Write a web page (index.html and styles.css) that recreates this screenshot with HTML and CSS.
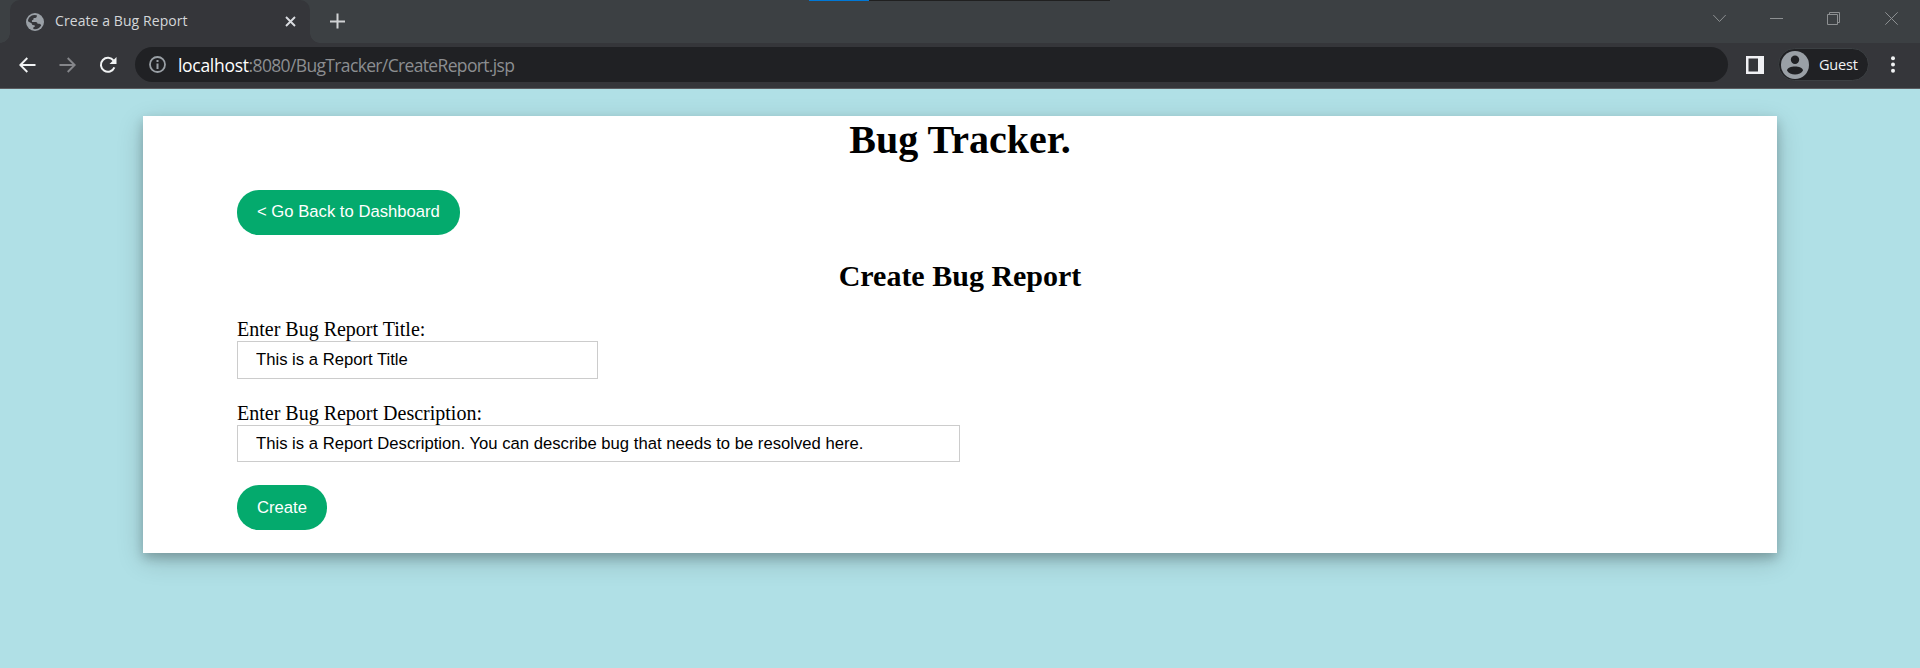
FILE: index.html
```html
<!DOCTYPE html>
<html lang="en">
<head>
<meta charset="utf-8">
<title>Create a Bug Report</title>
<link rel="stylesheet" href="styles.css">
</head>
<body>
<header class="browser">
  <div class="tabstrip">
    <div class="capture-bar"></div>
    <div class="tab">
      <svg class="favicon" width="18" height="18" viewBox="0 0 18 18"><circle cx="9" cy="9" r="9" fill="#9aa0a6"/><path d="M2 8.200C2 4.800 4.800 2 8.200 1.900L10.800 2.200L10.800 3.400Q10.600 4.800 9.200 4.900L7.600 5L7.500 6.600L5.900 7.400L6 8.900L9.800 8.900Q11.500 9.100 11.600 10.700L13.400 10.800Q14.600 11 15.200 12.300C13.800 14.800 11.700 16.200 9 16.200L7.300 15.900L7.400 14.300L8.800 13.700L8.600 12.300L6.400 11.900L5.500 10.200L3.600 9.200Z" fill="#35363a"/></svg>
      <span class="tab-title">Create a Bug Report</span>
      <svg class="tab-close" width="11" height="11" viewBox="0 0 11 11"><path d="M1 1L10 10M10 1L1 10" stroke="#dadce0" stroke-width="1.900"/></svg>
    </div>
    <svg class="new-tab" width="16" height="16" viewBox="0 0 16 16"><path d="M7.500 .5V15.500M0 8.500H15" stroke="#d0d2d4" stroke-width="2"/></svg>
    <div class="window-controls">
      <svg width="13" height="9" viewBox="0 0 13 9"><path d="M.3 1L6.500 7.500L12.700 1" fill="none" stroke="#8d9092"/></svg>
      <svg width="13" height="13" viewBox="0 0 13 13"><path d="M0 6.500H13" stroke="#8d9092"/></svg>
      <svg width="13" height="13" viewBox="0 0 13 13"><path d="M.5 2.500H10.500V12.500H.5ZM2.500 2.500V.5H12.500V10.500H10.500" fill="none" stroke="#8d9092"/></svg>
      <svg class="window-close" width="13" height="13" viewBox="0 0 13 13"><path d="M.3 .3L12.700 12.700M12.700 .3L.3 12.700" stroke="#8d9092"/></svg>
    </div>
  </div>
  <div class="toolbar">
    <nav class="nav-icons">
      <svg width="17" height="16" viewBox="0 0 17 16"><path d="M16.500 8H1.600M8.300 1L1.300 8L8.300 15" fill="none" stroke="#f1f3f4" stroke-width="1.900"/></svg>
      <svg width="17" height="16" viewBox="0 0 17 16"><path d="M.5 8H15.400M8.700 1L15.700 8L8.700 15" fill="none" stroke="#85868a" stroke-width="1.900"/></svg>
      <svg width="18" height="18" viewBox="0 0 18 18"><path d="M14.600 4.700A7 7 0 1 0 15.400 11.400" fill="none" stroke="#f1f3f4" stroke-width="2"/><path d="M17.500 1V8H10.500Z" fill="#f1f3f4"/></svg>
    </nav>
    <div class="omnibox">
      <svg width="17" height="17" viewBox="0 0 17 17"><circle cx="8.500" cy="8.500" r="7.500" fill="none" stroke="#9aa0a6" stroke-width="1.800"/><path d="M8.500 4V6M8.500 7.500V13" stroke="#9aa0a6" stroke-width="2"/></svg>
      <span class="url"><span class="host">localhost</span>:8080/BugTracker/CreateReport.jsp</span>
    </div>
    <svg class="side-panel" width="18" height="18" viewBox="0 0 18 18"><path d="M0 0H18V18H0Z" fill="#f1f1f4"/><path d="M2.500 2.500H12V15.500H2.500Z" fill="#35363a"/></svg>
    <div class="profile">
      <svg width="28" height="28" viewBox="0 0 28 28"><circle cx="14" cy="14" r="14" fill="#9aa0a6"/><circle cx="14" cy="8.700" r="4.200" fill="#202124"/><path d="M6 19.500C6.500 14.300 21.500 14.300 22 19.500C19.500 24.700 8.500 24.700 6 19.500Z" fill="#202124"/></svg>
      <span>Guest</span>
    </div>
    <svg class="menu" width="4" height="17" viewBox="0 0 4 17"><circle cx="2" cy="2.200" r="2" fill="#f1f3f4"/><circle cx="2" cy="8.500" r="2" fill="#f1f3f4"/><circle cx="2" cy="14.800" r="2" fill="#f1f3f4"/></svg>
  </div>
</header>
<main class="card">
  <h1>Bug Tracker.</h1>
  <button class="button" type="button">&lt; Go Back to Dashboard</button>
  <h2>Create Bug Report</h2>
  <form class="report-form">
    <label for="title">Enter Bug Report Title:</label>
    <input class="field field-title" id="title" type="text" value="This is a Report Title">
    <label for="description">Enter Bug Report Description:</label>
    <input class="field field-description" id="description" type="text" value="This is a Report Description. You can describe bug that needs to be resolved here.">
    <button class="button button-create" type="button">Create</button>
  </form>
</main>
</body>
</html>
```
FILE: styles.css
```css
* { box-sizing: border-box; }
body {
  margin: 0;
  height: 668px;
  overflow: hidden;
  background: #b0e0e6;
  font-family: "Liberation Serif", serif;
  font-size: 20px;
  color: #000;
}
svg { display: block; flex: none; }
.browser { font-family: "Open Sans", "Noto Sans", sans-serif; }

.tabstrip {
  position: relative;
  display: flex;
  align-items: flex-start;
  height: 43px;
  padding-left: 10px;
  background: #3c4043;
}
.capture-bar {
  position: absolute;
  top: 0;
  left: 809px;
  width: 301px;
  height: 1px;
  background: linear-gradient(to right, #0078d7 60px, #202020 60px);
}
.tab {
  position: relative;
  display: flex;
  align-items: center;
  width: 300px;
  height: 43px;
  padding: 0 14px 0 16px;
  border-radius: 10px 10px 0 0;
  background: #35363a;
}
.tab::before, .tab::after {
  content: "";
  position: absolute;
  bottom: 0;
  width: 10px;
  height: 10px;
}
.tab::before { left: -10px; background: radial-gradient(circle at 0 0, transparent 9.5px, #35363a 10px); }
.tab::after { right: -10px; background: radial-gradient(circle at 100% 0, transparent 9.5px, #35363a 10px); }
.tab-title {
  margin: -1px 0 0 11px;
  color: #d4d6d9;
  font-size: 14px;
  line-height: 20px;
  letter-spacing: .08px;
  white-space: nowrap;
}
.tab-close { margin-left: auto; }
.new-tab { margin: 13px 0 0 20px; }
.window-controls {
  display: flex;
  align-items: center;
  gap: 44px;
  height: 37px;
  margin-left: auto;
  padding-right: 22px;
}
.window-close { margin-left: 1px; }

.toolbar {
  display: flex;
  align-items: center;
  height: 46px;
  padding: 0 25px 2px 19px;
  border-bottom: 1px solid #5b5c60;
  background: #35363a;
}
.nav-icons { display: flex; align-items: center; gap: 23px; width: 116px; }
.omnibox {
  display: flex;
  align-items: center;
  gap: 12px;
  width: 1593px;
  height: 35px;
  padding-left: 14px;
  border-radius: 18px;
  background: #202124;
}
.url {
  color: #8c8e91;
  font-size: 17.500px;
  line-height: 24px;
  letter-spacing: -.65px;
  white-space: nowrap;
}
.host { color: #fff; letter-spacing: -.3px; }
.side-panel { margin-left: 18px; }
.profile {
  display: flex;
  align-items: center;
  gap: 10px;
  width: 91px;
  height: 33px;
  margin-left: 14px;
  padding-left: 2px;
  border: 1px solid #3c4043;
  border-radius: 17px;
  background: #202124;
  color: #f1f3f4;
  font-size: 14.500px;
  letter-spacing: -.2px;
}
.menu { margin-left: auto; }

.card {
  width: 1634px;
  height: 437px;
  margin: 27px auto 0;
  padding: 0 94px;
  background: #fff;
  box-shadow: 0 5px 10px rgba(0, 0, 0, .2), 0 7.500px 25px rgba(0, 0, 0, .19);
}
h1, h2 { margin: 0; text-align: center; font-weight: bold; }
h1 { height: 74px; font-size: 40px; line-height: 47px; }
h2 { height: 82px; padding-top: 23px; font-size: 30px; line-height: 36px; }
.button {
  display: block;
  height: 45px;
  padding: 0 20px 2px;
  border: 0;
  border-radius: 22px;
  background: #04aa6d;
  color: #fff;
  font: 16.670px "Liberation Sans", sans-serif;
}
.button-create { padding-bottom: 0; }
.report-form { display: flex; flex-direction: column; align-items: flex-start; }
.report-form label { height: 24px; font-size: 20px; line-height: 24px; }
.field {
  height: 38px;
  margin-bottom: 22px;
  padding: 0 18px;
  border: 1px solid #ccc;
  background: #fff;
  color: #000;
  font: 16.670px "Liberation Sans", sans-serif;
}
.field-title { width: 361px; }
.field-description { width: 723px; height: 37px; margin-bottom: 23px; }
```
